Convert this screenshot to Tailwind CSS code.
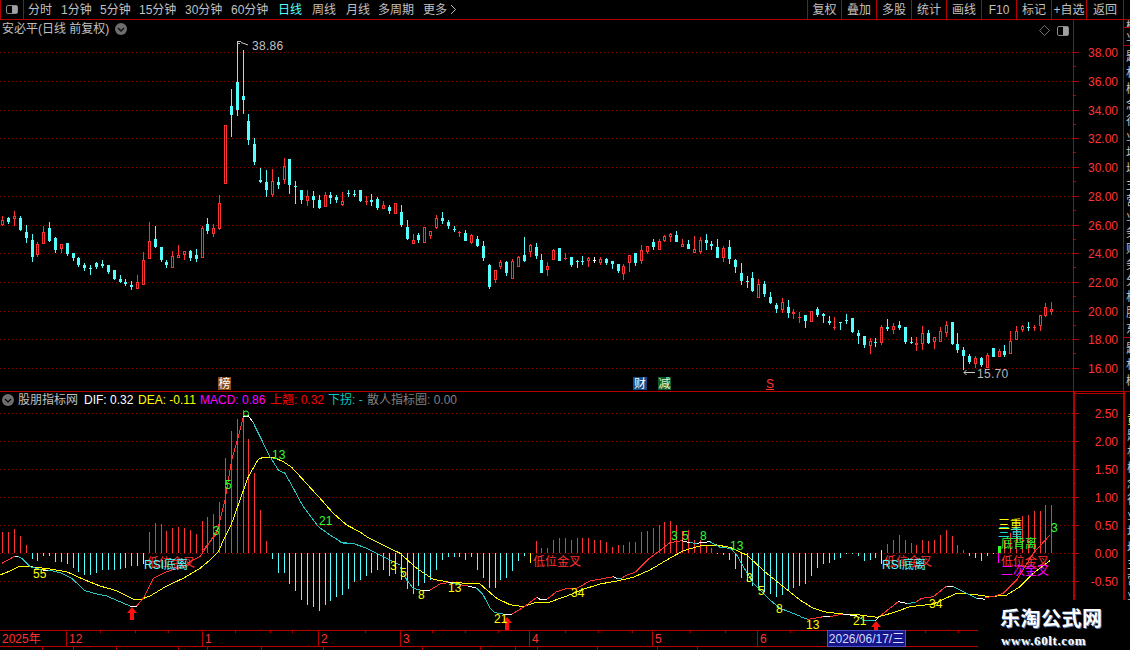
<!DOCTYPE html>
<html lang="zh-CN">
<head>
    <meta charset="UTF-8">
    <title>安必平 日线</title>
    <script src="https://cdn.jsdelivr.net/npm/@tailwindcss/browser@4"></script>
</head>
<body class="bg-black">
<div class="relative w-[1130px] h-[650px] overflow-hidden bg-black text-[12px] leading-none text-[#c0c0c0] font-['Liberation_Sans','Noto_Sans_CJK_SC',sans-serif]">

    <!-- Toolbar -->
    <div class="flex items-center h-[20px] border-b border-[#b40000]">
        <div class="flex items-center justify-center w-[24px] h-full border-x border-[#b40000]">
            <div class="flex justify-end w-[12px] h-[9px] border border-[#8a8a8a] rounded-[2px]"><div class="w-[5px] bg-[#a0a0a0]"></div></div>
        </div>
        <div class="flex items-center ml-[4px]">
            <span class="w-[33px]">分时</span>
            <span class="w-[39px]">1分钟</span>
            <span class="w-[39px]">5分钟</span>
            <span class="w-[46px]">15分钟</span>
            <span class="w-[46px]">30分钟</span>
            <span class="w-[47px]">60分钟</span>
            <span class="w-[34px] text-[#54ffff]">日线</span>
            <span class="w-[34px]">周线</span>
            <span class="w-[32px]">月线</span>
            <span class="w-[45px]">多周期</span>
            <span>更多</span>
            <svg class="ml-[3px]" width="7" height="11" viewBox="0 0 7 11"><path d="M1 1l4.500 4.500L1 10" fill="none" stroke="#c0c0c0"/></svg>
        </div>
        <div class="flex items-center h-full ml-auto text-center">
            <span class="flex items-center justify-center w-[34px] h-full border-l border-[#b40000]">复权</span>
            <span class="flex items-center justify-center w-[35px] h-full border-l border-[#b40000]">叠加</span>
            <span class="flex items-center justify-center w-[35px] h-full border-l border-[#b40000]">多股</span>
            <span class="flex items-center justify-center w-[35px] h-full border-l border-[#b40000]">统计</span>
            <span class="flex items-center justify-center w-[35px] h-full border-l border-[#b40000]">画线</span>
            <span class="flex items-center justify-center w-[35px] h-full border-l border-[#b40000]">F10</span>
            <span class="flex items-center justify-center w-[35px] h-full border-l border-[#b40000]">标记</span>
            <span class="flex items-center justify-center w-[35px] h-full border-l border-[#b40000] whitespace-nowrap">+自选</span>
            <span class="flex items-center justify-center w-[37px] h-full border-l border-[#b40000]">返回</span>
            <span class="w-[7px] h-full border-l border-[#b40000]"></span>
        </div>
    </div>

    <!-- Price panel -->
    <div class="flex h-[372px] border-b border-[#b40000]">
        <div class="relative w-[1073px] h-full">
            <svg id="priceChart" class="block" width="1073" height="371" viewBox="0 20 1073 371"></svg>
            <div class="absolute left-[2px] top-[3px] flex items-center gap-[6px]">
                <span>安必平(日线 前复权)</span>
                <svg width="12" height="12" viewBox="0 0 12 12"><circle cx="6" cy="6" r="6" fill="#6e6e6e"/><path d="M3 5l3 3 3-3" fill="none" stroke="#111" stroke-width="1.500"/></svg>
            </div>
            <div class="absolute right-[4px] top-[5px] flex items-center gap-[7px]">
                <svg width="11" height="11" viewBox="0 0 11 11"><path d="M5.500 .5l5 5-5 5-5-5z" fill="none" stroke="#707070"/></svg>
                <div class="flex justify-end w-[12px] h-[10px] border border-[#8a8a8a] rounded-[2px]"><div class="w-[5px] bg-[#a0a0a0]"></div></div>
            </div>
            <span class="absolute left-[218px] top-[357px] w-[13px] h-[13px] flex items-center justify-center bg-[#8b4a12] text-white">榜</span>
            <span class="absolute left-[633px] top-[357px] w-[14px] h-[13px] flex items-center justify-center bg-[#154a86] text-white">财</span>
            <span class="absolute left-[658px] top-[357px] w-[13px] h-[13px] flex items-center justify-center bg-[#0f5a2a] text-[#e0ffd0]">减</span>
            <span class="absolute left-[766px] top-[358px] text-[#ff3232] underline">S</span>
        </div>
        <div class="w-[50px] h-full border-l border-[#b40000]">
            <svg id="priceAxis" class="block" width="49" height="371" viewBox="1074 20 49 371"></svg>
        </div>
        <div class="flex flex-col w-[7px] h-full border-l border-[#b40000] overflow-hidden">
            <div class="h-[8px] border-b border-[#b40000] shrink-0 pl-[2px] overflow-hidden">概</div>
            <div class="h-[18px] border-b border-[#b40000] shrink-0 pl-[2px] pt-[3px] overflow-hidden">业</div>
            <div class="h-[292px] border-b border-[#b40000] shrink-0 pl-[2px] pt-[3px] leading-[16px] overflow-hidden">题材概念行业地域主营业务财务分析股东</div>
            <div class="pl-[2px] pt-[3px] leading-[16px]">题材概</div>
        </div>
    </div>

    <!-- MACD panel -->
    <div class="flex h-[238px]">
        <div class="relative w-[1073px] h-full">
            <svg id="macdChart" class="block" width="1073" height="238" viewBox="0 392 1073 238"></svg>
            <div class="absolute left-[2px] top-[2px] flex items-center whitespace-nowrap">
                <svg width="12" height="12" viewBox="0 0 12 12"><circle cx="6" cy="6" r="6" fill="#6e6e6e"/><path d="M3 5l3 3 3-3" fill="none" stroke="#111" stroke-width="1.500"/></svg>
                <span class="ml-[4px] w-[66px]">股朋指标网</span>
                <span class="w-[54px] text-white">DIF: 0.32</span>
                <span class="w-[62px] text-[#ffff00]">DEA: -0.11</span>
                <span class="w-[70px] text-[#ff00ff]">MACD: 0.86</span>
                <span class="w-[58px] text-[#ff0000]">上翘: 0.32</span>
                <span class="w-[39px] text-[#00c8c8]">下拐: -</span>
                <span class="text-[#808080]">散人指标圈: 0.00</span>
            </div>
        </div>
        <div class="w-[50px] h-full border-l-2 border-[#b40000]">
            <svg id="macdAxis" class="block" width="48" height="238" viewBox="1075 392 48 238"></svg>
        </div>
        <div class="w-[7px] h-full border-l-2 border-[#b40000] pl-[2px] pt-[20px] leading-[16px] overflow-hidden"><span class="text-[#ffff00]">黄</span>题材概念行业地域主营业</div>
    </div>

    <!-- Date axis -->
    <div class="relative flex h-[17px] border-y border-[#b40000] text-[#ff3232] w-[978px] items-center">
        <span class="w-[66px] pl-[2px]">2025年</span>
        <span class="w-[136px] h-full flex items-center border-l border-[#b40000] pl-[2px]">12</span>
        <span class="w-[116px] h-full flex items-center border-l border-[#b40000] pl-[2px]">1</span>
        <span class="w-[82px] h-full flex items-center border-l border-[#b40000] pl-[2px]">2</span>
        <span class="w-[129px] h-full flex items-center border-l border-[#b40000] pl-[2px]">3</span>
        <span class="w-[123px] h-full flex items-center border-l border-[#b40000] pl-[2px]">4</span>
        <span class="w-[105px] h-full flex items-center border-l border-[#b40000] pl-[2px]">5</span>
        <span class="flex-1 h-full flex items-center border-l border-[#b40000] pl-[2px]">6</span>
        <svg id="rowTicks" class="absolute left-0 top-0" width="978" height="2" viewBox="0 0 978 2"></svg>
        <span class="absolute left-[828px] top-0 w-[77px] h-[15px] flex items-center justify-center bg-[#16168c] text-[#d4dcff] outline outline-[#5050c0]">2026/06/17/三</span>
    </div>
    <svg id="bottomTicks" class="block" width="978" height="3" viewBox="0 0 978 3"></svg>

    <!-- Watermark -->
    <div class="absolute left-[978px] top-[600px] w-[152px] h-[50px] bg-black flex flex-col items-start pl-[22px] pt-[8px]">
        <span class="text-[20px] leading-[22px] font-bold tracking-[0.5px] text-white font-['Liberation_Serif','Noto_Sans_CJK_SC',serif] [text-shadow:1px_1px_0_#5a7ab0]">乐淘公式网</span>
        <span class="mt-[4px] ml-[1px] text-[13px] leading-[14px] font-bold tracking-[0.6px] text-white font-['Liberation_Serif',serif] [text-shadow:1px_1px_0_#5a7ab0]">www.60lt.com</span>
    </div>
</div>

<script>
    const RED = '#ff3232', CYAN = '#54ffff', WHITE = '#ffffff', YELLOW = '#ffff00', GREEN = '#30ff30', MAGENTA = '#ff00ff', TEAL = '#20d8c8';
    const LINE_CYAN = '#28c4c4';
    const COLORS = { R: RED, C: CYAN, W: WHITE };
    const GRID = '#8c0000', AXIS = '#b40000';

    const barX = i => Math.round(2.3 + i * 5.86);

    // Candles read off the picture: wick top, body top, body bottom, wick bottom
    const candleBlocks = [
        [190, [[78,90,106,108,'R'],[82,84,96,102,'C'],[63,78,87,108,'R'],[78,84,121,123,'C'],[105,126,144,159,'C'],[132,150,201,216,'C'],[156,162,195,201,'R'],[108,126,162,162,'R'],[96,114,153,156,'C'],[141,144,180,189,'C'],[162,162,177,190,'R'],[159,159,192,198,'C'],[189,189,204,213,'C'],[201,204,225,231,'C'],[219,225,234,243,'C'],[225,234,236,255,'C'],[216,219,232,237,'C'],[210,222,228,234,'C'],[225,225,246,252,'C'],[240,240,267,270,'C'],[255,267,276,279,'C'],[267,276,282,288,'C'],[273,285,290,300,'C'],[255,276,297,297,'R'],[186,210,285,285,'R'],[96,153,207,207,'R'],[108,147,171,174,'C'],[171,171,210,216,'C'],[210,216,225,234,'C'],[183,198,234,234,'R'],[165,195,204,204,'R'],[183,183,195,210,'R'],[180,183,204,213,'C'],[177,195,207,216,'C'],[108,114,204,204,'R'],[84,102,123,132,'C'],[102,114,132,141,'R'],[15,39,117,120,'R']]],
        [30, [[286,286,461,461,'R'],[178,228,255,320,'C'],[36,156,240,258,'C'],[60,198,210,252,'C'],[252,273,330,345,'C'],[324,342,396,405,'C'],[414,450,456,459,'C'],[420,456,480,501,'C'],[417,453,495,501,'R'],[441,456,465,477,'C'],[384,408,450,462,'R'],[387,387,465,492,'C'],[453,468,471,522,'C']]],
        [190, [[0,0,30,42,'C'],[0,18,33,48,'R'],[3,18,30,54,'C'],[15,30,54,57,'C'],[6,15,51,51,'R'],[6,15,24,42,'C'],[15,21,30,39,'C'],[6,33,45,48,'R'],[0,9,12,21,'C'],[0,12,13,21,'C'],[0,0,33,36,'C'],[18,33,34,45,'R'],[12,30,36,48,'C'],[21,27,54,60,'C'],[33,45,57,57,'R'],[45,51,63,72,'C'],[39,39,72,72,'R'],[45,66,105,111,'C'],[90,111,147,150,'C'],[132,150,162,162,'R'],[129,135,150,159,'C'],[111,111,159,159,'R'],[123,123,138,147,'R'],[75,84,114,117,'R'],[66,84,93,102,'C'],[90,96,108,117,'C'],[108,117,119,126,'C'],[123,126,127,141,'R'],[120,129,153,153,'C'],[132,135,159,162,'R'],[138,147,168,171,'C'],[153,168,204,213,'C'],[222,225,291,297,'C'],[240,240,270,279,'R'],[210,216,231,237,'R'],[213,216,249,258,'C'],[207,213,267,267,'R'],[198,201,231,231,'R'],[141,195,213,216,'C'],[162,165,186,201,'R'],[159,171,198,207,'C'],[192,210,249,249,'C'],[216,228,240,258,'R'],[177,180,210,210,'R'],[174,174,213,213,'C'],[189,204,206,210,'R'],[201,201,225,231,'C'],[210,213,215,234,'C'],[198,213,216,225,'C'],[201,204,213,231,'R'],[201,210,212,219,'W']]],
        [220, [[112,117,129,135,'R'],[114,117,129,135,'C'],[123,123,132,147,'C'],[132,132,153,159,'C'],[132,138,162,180,'R'],[105,105,129,156,'R'],[99,99,129,138,'C'],[75,90,123,132,'R'],[78,78,96,102,'R'],[57,66,81,90,'C'],[57,63,90,90,'R'],[45,48,63,66,'R'],[39,42,51,66,'R'],[33,45,66,66,'C'],[57,72,81,81,'R'],[60,72,87,87,'C'],[48,87,99,99,'R'],[51,60,96,102,'R'],[42,60,69,90,'C'],[63,72,78,90,'C'],[57,81,114,114,'C'],[78,84,114,126,'R'],[60,81,117,132,'C'],[117,120,141,159,'C'],[129,159,183,195,'C'],[168,183,185,204,'C'],[156,174,213,216,'C'],[177,192,234,234,'R'],[183,192,222,231,'C'],[216,231,249,252,'C'],[249,255,267,279,'C'],[234,246,270,279,'R'],[240,261,279,294,'C'],[267,276,282,297,'R'],[276,290,291,309,'R'],[285,285,303,324,'C'],[273,273,306,306,'R'],[261,267,285,291,'C'],[279,282,288,309,'C'],[288,303,309,315,'C'],[291,321,322,330,'R'],[306,306,308,330,'C'],[282,300,302,312,'C']]],
        [290, [[84,84,126,128,'C'],[120,129,138,162,'C'],[138,138,165,174,'C'],[144,153,168,192,'R'],[144,156,158,171,'C'],[105,111,159,165,'R'],[87,111,117,123,'C'],[99,108,120,132,'R'],[93,105,114,120,'C'],[111,111,156,162,'C'],[141,156,159,162,'C'],[141,159,165,183,'R'],[108,129,162,180,'R'],[120,129,159,162,'C'],[141,141,156,177,'R'],[111,123,156,156,'R'],[93,105,129,141,'R'],[96,96,162,165,'C'],[129,162,180,189,'C'],[171,180,198,240,'C'],[192,198,216,222,'C'],[198,204,222,234,'R'],[201,204,225,231,'C'],[189,195,234,234,'R'],[174,174,201,201,'C'],[177,183,201,201,'R'],[165,183,195,201,'C'],[123,153,192,192,'R'],[108,123,150,150,'R'],[105,108,120,126,'R'],[96,111,114,123,'C'],[105,111,114,123,'R'],[75,75,108,123,'R'],[39,51,78,81,'R'],[36,57,66,75,'R']]]
    ];

    const macdBars = [21,21,24,17,8,
        -6,-8,-3,-3,-9,-9,-11,-15,-19,-22,-22,-20,-17,-17,-17,-16,-15,-13,-13,
        0,
        21,30,29,22,25,26,25,23,19,32,36,39,51,95,122,134,143,114,80,43,12,
        -6,-20,-20,-31,-38,-47,-52,-54,-58,-52,-48,-44,-42,-36,-29,-27,-23,-20,-17,-17,-23,-21,
        -27,-36,-41,-33,-30,-27,-17,-7,-4,-4,-4,-7,-4,-17,-25,-35,-35,-27,-25,-18,-8,-3,
        0,
        12,5,5,13,15,15,13,15,15,15,13,13,11,6,8,8,11,11,21,22,25,28,31,32,28,22,23,13,13,7,5,
        -1,-2,-7,-16,-25,-29,-33,-37,-39,-41,-44,-42,-37,-35,-33,
        -31,-23,-15,-11,-10,-7,-5,-1,-1,-3,-8,-7,-5,
        0,
        9,13,18,13,10,8,13,12,13,18,23,17,8,3,
        -3,-5,-8,-3,-1,
        0,
        13,20,23,37,38,42,42,48,48];

    // Zoomed-crop coordinates to page coordinates
    const crop = (ox, oy, pts) => pts.map(p => [ox + p[0] / 3, oy + p[1] / 3]);
    const deaLine = [].concat(
        crop(0, 520, [[0,165],[30,153],[60,138],[100,141],[150,147],[200,155],[250,178],[300,198],[350,212],[400,237],[420,239],[450,228],[500,198],[550,175],[600,145],[630,120],[658,92]]),
        crop(180, 400, [[115,455],[135,410],[155,370],[180,300],[205,230],[235,178],[250,172],[280,172],[310,185],[335,202],[370,240],[420,295],[460,340],[500,375],[540,396]]),
        crop(0, 520, [[1100,50],[1150,75],[1200,100]]),
        crop(400, 520, [[50,145],[100,178],[150,187],[240,192],[290,235],[330,254],[370,260],[410,246],[450,246],[500,228],[550,208],[600,192],[650,183],[700,172],[750,150],[800,120],[850,92],[900,78],[950,75],[990,82],[1040,105],[1100,160],[1150,200],[1200,240]]),
        crop(800, 490, [[40,355],[80,367],[130,372],[180,375],[230,382],[280,368],[330,350],[400,342],[470,310],[520,313],[570,320],[620,315],[660,290],[700,250],[750,212]])
    );
    // DIF line pieces: colour, points
    const difLine = [
        [RED, crop(0, 520, [[6,130],[45,108]])],
        [WHITE, crop(0, 520, [[45,108],[55,110]])],
        [LINE_CYAN, crop(0, 520, [[55,110],[65,115],[90,140],[130,150]])],
        [WHITE, crop(0, 520, [[130,150],[145,150]])],
        [LINE_CYAN, crop(0, 520, [[145,150],[180,158],[215,175],[255,212],[290,222],[320,228],[360,245],[390,258]])],
        [WHITE, crop(0, 520, [[390,258],[410,258]])],
        [RED, crop(0, 520, [[410,258],[430,235],[460,175],[500,155],[550,140],[570,125],[600,110],[640,50],[660,15]])],
        [RED, crop(180, 400, [[70,450],[110,400],[135,300],[155,180],[175,110],[190,50]])],
        [WHITE, crop(180, 400, [[190,50],[205,48],[218,65]])],
        [LINE_CYAN, crop(180, 400, [[218,65],[245,120],[270,170],[295,210],[315,220],[340,265],[370,320],[415,380],[450,405],[490,430],[520,430],[540,438]])],
        [LINE_CYAN, crop(0, 520, [[1020,68],[1060,70],[1100,85],[1150,110],[1200,135]])],
        [LINE_CYAN, crop(400, 520, [[0,140],[20,180],[40,205],[60,210]])],
        [WHITE, crop(400, 520, [[60,210],[90,210]])],
        [RED, crop(400, 520, [[90,210],[120,192],[145,188]])],
        [WHITE, crop(400, 520, [[145,188],[160,190]])],
        [LINE_CYAN, crop(400, 520, [[160,190],[185,195]])],
        [RED, crop(400, 520, [[185,195],[205,198]])],
        [WHITE, crop(400, 520, [[205,198],[230,205]])],
        [LINE_CYAN, crop(400, 520, [[230,205],[250,225],[270,265],[285,278],[310,282]])],
        [WHITE, crop(400, 520, [[310,285],[335,283]])],
        [RED, crop(400, 520, [[335,283],[370,262],[410,232]])],
        [WHITE, crop(400, 520, [[410,232],[420,238],[440,238]])],
        [RED, crop(400, 520, [[440,238],[470,215],[500,205],[530,205],[570,183],[640,170]])],
        [WHITE, crop(400, 520, [[640,170],[650,175]])],
        [LINE_CYAN, crop(400, 520, [[650,175],[665,175]])],
        [RED, crop(400, 520, [[665,175],[680,165],[705,157],[745,118],[810,68],[845,62]])],
        [WHITE, crop(400, 520, [[845,62],[870,68]])],
        [LINE_CYAN, crop(400, 520, [[870,68],[890,70]])],
        [WHITE, crop(400, 520, [[890,70],[930,65]])],
        [LINE_CYAN, crop(400, 520, [[930,65],[960,82],[990,85],[1010,105],[1030,140],[1060,190],[1110,240],[1140,265],[1200,288]])],
        [LINE_CYAN, crop(800, 490, [[0,380],[25,388]])],
        [RED, crop(800, 490, [[25,388],[70,380]])],
        [WHITE, crop(800, 490, [[70,380],[90,380]])],
        [RED, crop(800, 490, [[90,380],[130,372]])],
        [WHITE, crop(800, 490, [[130,372],[170,378]])],
        [LINE_CYAN, crop(800, 490, [[170,378],[190,390],[225,393]])],
        [WHITE, crop(800, 490, [[225,393],[240,378]])],
        [RED, crop(800, 490, [[240,378],[295,335]])],
        [WHITE, crop(800, 490, [[295,335],[320,340]])],
        [LINE_CYAN, crop(800, 490, [[320,340],[345,338]])],
        [RED, crop(800, 490, [[345,338],[365,325],[400,320],[440,288]])],
        [WHITE, crop(800, 490, [[440,288],[460,290]])],
        [LINE_CYAN, crop(800, 490, [[460,290],[490,305],[530,325]])],
        [WHITE, crop(800, 490, [[530,325],[555,328]])],
        [RED, crop(800, 490, [[555,322],[580,320],[610,310],[650,270],[700,190],[750,135]])]
    ];

    const macdTexts = [
        ['55', 33, 578, YELLOW], ['3', 390, 570, YELLOW], ['5', 400, 577, YELLOW], ['8', 418, 599, YELLOW], ['13', 448, 592, YELLOW], ['21', 494, 623, YELLOW], ['34', 571, 597, YELLOW],
        ['3', 746, 582, YELLOW], ['5', 758, 595, YELLOW], ['8', 776, 613, YELLOW], ['13', 806, 629, YELLOW], ['21', 853, 625, YELLOW], ['34', 929, 608, YELLOW],
        ['3', 213, 535, GREEN], ['5', 225, 489, GREEN], ['13', 272, 459, GREEN], ['21', 319, 525, GREEN], ['3', 671, 540, GREEN], ['5', 682, 540, GREEN], ['8', 700, 540, GREEN], ['13', 730, 550, GREEN], ['3', 1051, 532, GREEN],
        ['低位金叉', 147, 567, RED], ['RSI底离', 144, 569, CYAN], ['低位金叉', 533, 566, RED], ['低位金叉', 884, 566, RED], ['RSI底离', 882, 569, CYAN],
        ['三重', 998, 529, YELLOW], ['重', 1011, 538, TEAL], ['三', 998, 537, TEAL], ['底背离', 1001, 548, GREEN], ['低位金叉', 1001, 566, RED], ['二次金叉', 1001, 575, MAGENTA]
    ];

    const priceRows = [52, 81, 110, 138, 167, 196, 225, 253, 282, 311, 339, 368];
    const macdRows = [413, 441, 469, 497, 525, 553, 581];
    const priceLabels = ['38.00','36.00','34.00','32.00','30.00','28.00','26.00','24.00','22.00','20.00','18.00','16.00'];
    const macdLabels = ['2.50','2.00','1.50','1.00','0.50','0.00','-0.50'];

    function gridLine(y) {
        return `<line x1="0" x2="1073" y1="${y + 0.5}" y2="${y + 0.5}" stroke="${GRID}" stroke-dasharray="1 3" shape-rendering="crispEdges"/>`;
    }

    function drawCandles() {
        let out = '', i = 0;
        candleBlocks.forEach(([oy, rows]) => rows.forEach(row => {
            const x = barX(i++);
            const [wt, bt, bb, wb] = row.slice(0, 4).map(v => Math.round(oy + v / 3));
            const color = COLORS[row[4]];
            if (wt < bt) out += `<rect x="${x}" y="${wt}" width="1" height="${bt - wt}" fill="${color}"/>`;
            if (wb > bb) out += `<rect x="${x}" y="${bb}" width="1" height="${wb - bb}" fill="${color}"/>`;
            if (row[4] === 'R' && bb - bt > 2) {
                out += `<rect x="${x - 0.5}" y="${bt + 0.5}" width="2" height="${bb - bt - 1}" fill="none" stroke="${color}"/>`;
            } else {
                out += `<rect x="${x - 1}" y="${bt}" width="3" height="${Math.max(bb - bt, 1)}" fill="${color}"/>`;
            }
        }));
        return out;
    }

    function drawBars() {
        const zero = 553;
        let out = '';
        macdBars.forEach((h, i) => {
            if (!h) return;
            const top = h > 0 ? zero - h : zero;
            out += `<rect x="${barX(i)}" y="${top}" width="1" height="${Math.abs(h)}" fill="${h > 0 ? RED : CYAN}"/>`;
        });
        // turning marks on the zero line
        out += `<rect x="143" y="553" width="1" height="11" fill="${YELLOW}"/>`;
        out += `<rect x="530" y="553" width="1" height="10" fill="${YELLOW}"/>`;
        out += `<rect x="881" y="550" width="1" height="14" fill="${YELLOW}"/>`;
        out += `<rect x="998" y="546" width="3" height="7" fill="${GREEN}"/>`;
        out += `<rect x="998" y="553" width="1" height="10" fill="${MAGENTA}"/>`;
        return out;
    }

    function polyline(points, color) {
        const d = points.map(p => p[0].toFixed(1) + ',' + p[1].toFixed(1)).join(' ');
        return `<polyline points="${d}" fill="none" stroke="${color}" shape-rendering="crispEdges"/>`;
    }

    function arrow(x, y) {
        return `<path d="M${x} ${y}l5 6h-3v7h-4v-7h-3z" fill="#ff1010"/>`;
    }

    function drawAxis(labels, rows, step, tickBelowLast) {
        let out = '';
        labels.forEach((label, n) => {
            const y = rows[n];
            out += `<rect x="1073" y="${y}" width="6" height="1" fill="${AXIS}"/>`;
            if (n < labels.length - 1 || tickBelowLast) out += `<rect x="1073" y="${Math.round(y + step / 2)}" width="3" height="1" fill="${AXIS}"/>`;
            out += `<text x="1118" y="${y + 5}" text-anchor="end" fill="${RED}">${label}</text>`;
        });
        return out;
    }

    let price = '';
    priceRows.forEach(y => { price += gridLine(y); });
    price += drawCandles();
    price += `<path d="M237 41.500h4M237 43.500h3M241 42.500l3 1 4 1.500" fill="none" stroke="#c8c8c8"/>`;
    price += `<text x="252" y="50" fill="#c0c0c0" letter-spacing=".3">38.86</text>`;
    price += `<path d="M964 372.500H975M966.500 370l-2.500 2.500 2.500 2.500" fill="none" stroke="#c8c8c8"/>`;
    price += `<text x="977" y="378" fill="#b8b8b8" letter-spacing=".3">15.70</text>`;
    document.getElementById('priceChart').innerHTML = price;
    document.getElementById('priceAxis').innerHTML = drawAxis(priceLabels, priceRows, 28.7, false);

    let macd = '';
    macdRows.forEach(y => { macd += gridLine(y); });
    macd += drawBars();
    macd += polyline(deaLine, YELLOW);
    difLine.forEach(([color, pts]) => { macd += polyline(pts, color); });
    macd += `<circle cx="246" cy="413.500" r="2.500" fill="none" stroke="${GREEN}"/>`;
    macd += arrow(132, 607) + arrow(507, 617) + arrow(876, 621);
    macdTexts.forEach(([t, x, y, c]) => { macd += `<text x="${x}" y="${y}" fill="${c}">${t}</text>`; });
    document.getElementById('macdChart').innerHTML = macd;
    document.getElementById('macdAxis').innerHTML =
        `<rect x="1073" y="393" width="50" height="1" fill="${AXIS}"/>` + drawAxis(macdLabels, macdRows, 28, true);

    // small ticks on the date row and on the cut-off row below it
    let rowTicks = '', bottomTicks = '';
    [100, 135, 168, 235, 270, 292, 365, 432, 465, 498, 565, 598, 632, 690, 725, 790, 925, 958].forEach(x => {
        rowTicks += `<rect x="${x}" y="0" width="1" height="2" fill="${AXIS}"/>`;
    });
    [42, 73, 116, 178, 207, 261, 323, 422, 480, 515, 537, 597, 657, 697].forEach(x => {
        bottomTicks += `<rect x="${x}" y="0" width="1" height="3" fill="${AXIS}"/>`;
    });
    document.getElementById('rowTicks').innerHTML = rowTicks;
    document.getElementById('bottomTicks').innerHTML = bottomTicks;
</script>
</body>
</html>
